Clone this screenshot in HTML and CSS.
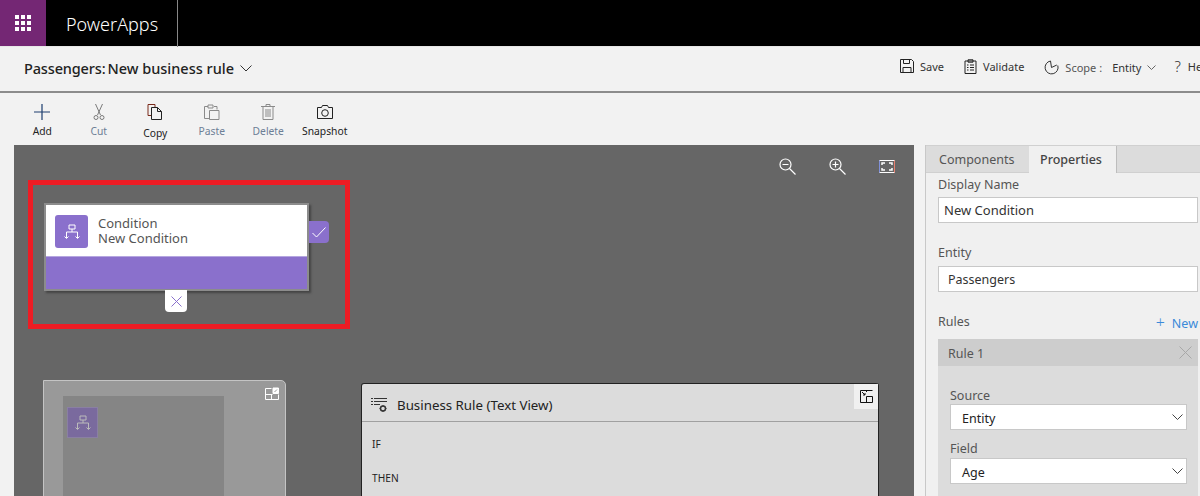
FILE: index.html
```html
<!DOCTYPE html>
<html lang="en">
<head>
<meta charset="utf-8">
<title>PowerApps</title>
<link rel="stylesheet" href="styles.css">
</head>
<body>
<div class="app">
  <header class="topbar">
    <div class="waffle">
      <svg width="16" height="16" viewBox="0 0 16 16" fill="#fff"><rect x="0" y="0" width="4" height="4"/><rect x="6" y="0" width="4" height="4"/><rect x="12" y="0" width="4" height="4"/><rect x="0" y="6" width="4" height="4"/><rect x="6" y="6" width="4" height="4"/><rect x="12" y="6" width="4" height="4"/><rect x="0" y="12" width="4" height="4"/><rect x="6" y="12" width="4" height="4"/><rect x="12" y="12" width="4" height="4"/></svg>
    </div>
    <div class="brand">PowerApps</div>
  </header>

  <div class="titlebar">
    <div class="title"><span class="title-entity">Passengers:</span><span class="title-name">New business rule</span>
      <svg class="title-chev" width="12" height="7" viewBox="0 0 12 7" fill="none" stroke="#333"><path d="M.5.5 6 6 11.5.5"/></svg>
    </div>
    <div class="actions">
      <div class="action action-save">
        <svg width="14" height="14" viewBox="0 0 14 14" fill="none" stroke="#222"><path d="M.5.5h11l2 2v11H.5z"/><path d="M3.5.5v4h6v-4M3 13.5v-5h8v5"/></svg>
        <span>Save</span>
      </div>
      <div class="action action-validate">
        <svg width="13" height="15" viewBox="0 0 13 15" fill="none" stroke="#222"><path d="M1 2h11v12.500H1z"/><path d="M4 .8h5v2.400H4zM3 6h1.500M6 6h4M3 8.500h1.500M6 8.500h4M3 11h1.500M6 11h4"/></svg>
        <span>Validate</span>
      </div>
      <div class="action action-scope">
        <svg width="15" height="15" viewBox="0 0 15 15" fill="none" stroke="#333"><path d="M6.500 1A6.500 6.500 0 1 0 13.800 5.500"/><path d="M6.500 1 7.500 7.500 12.800 5"/></svg>
        <span class="scope-label">Scope :</span>
        <span class="scope-value">Entity</span>
        <svg width="9" height="5" viewBox="0 0 9 5" fill="none" stroke="#666"><path d="M.5.500 4.500 4.500 8.500.500"/></svg>
      </div>
      <div class="action action-help">
        <span class="help-mark">?</span>
        <span>Help</span>
      </div>
    </div>
  </div>

  <nav class="toolbar">
    <div class="tool">
      <svg width="16" height="16" viewBox="0 0 16 16" stroke="#1c3d6e" stroke-width="1.200"><path d="M8 0v16M0 8h16"/></svg>
      <span>Add</span>
    </div>
    <div class="tool tool-off">
      <svg width="16" height="16" viewBox="0 0 16 16" fill="none" stroke="#7a7a7a"><path d="M4.500 0 9.500 11M11.500 0 6.500 11"/><circle cx="5" cy="13.500" r="2"/><circle cx="11" cy="13.500" r="2"/></svg>
      <span>Cut</span>
    </div>
    <div class="tool tool-copy">
      <svg width="16" height="16" viewBox="0 0 16 16" fill="none" stroke="#222"><path d="M1 .5h7v3M1 .5v11h3" stroke="#7a2a1a"/><path d="M4.500 3.500h6l4 4v8h-10zM10.500 3.500v4h4"/></svg>
      <span>Copy</span>
    </div>
    <div class="tool tool-off">
      <svg width="16" height="16" viewBox="0 0 16 16" fill="none" stroke="#8a8a8a"><path d="M4 2.500H.5v12H5M10 2.500h3v3"/><path d="M4 1h5v3H4zM5.500 6.500H15v9H5.500z"/></svg>
      <span>Paste</span>
    </div>
    <div class="tool tool-off">
      <svg width="14" height="16" viewBox="0 0 14 16" fill="none" stroke="#8a8a8a"><path d="M0 2.500h14M5 2.500V.5h4v2M2 2.500v13h10v-13M5 5v8M7 5v8M9 5v8"/></svg>
      <span>Delete</span>
    </div>
    <div class="tool">
      <svg width="16" height="14" viewBox="0 0 16 14" fill="none" stroke="#222"><path d="M.5 2.500h4l1-2h5l1 2h4v11H.5z"/><circle cx="8" cy="8" r="3.300"/></svg>
      <span>Snapshot</span>
    </div>
  </nav>

  <main class="workspace">
    <section class="canvas">
      <div class="zoom-tools">
        <svg width="17" height="17" viewBox="0 0 17 17" fill="none" stroke="#fff" stroke-width="1.200"><circle cx="6.500" cy="6.500" r="5.500"/><path d="M3.500 6.500h6M10.500 10.500l6 6"/></svg>
        <svg width="17" height="17" viewBox="0 0 17 17" fill="none" stroke="#fff" stroke-width="1.200"><circle cx="6.500" cy="6.500" r="5.500"/><path d="M3.500 6.500h6M6.500 3.500v6M10.500 10.500l6 6"/></svg>
        <svg width="16" height="13" viewBox="0 0 16 13" fill="none" stroke="#fff"><path d="M.5.500h15v12H.5z"/><path d="M.5.500v12" stroke="#7f8fd8"/><path d="M15.500.500v12" stroke="#e8806f"/><path d="M3 5V3h3M10 3h3v2M3 8v2h3M10 10h3V8" stroke-width="1.500"/></svg>
      </div>

      <div class="highlight"></div>

      <div class="node">
        <div class="node-head">
          <div class="node-icon">
            <svg width="16" height="16" viewBox="0 0 16 16" fill="none" stroke="#fff"><path d="M5 1h6v4H5zM8 5v3M2.500 8h11M2.500 8v6M13.500 8v6M.5 12.500l2 2 2-2M11.500 12.500l2 2 2-2"/></svg>
          </div>
          <div class="node-text">
            <div>Condition</div>
            <div>New Condition</div>
          </div>
        </div>
        <div class="node-foot"></div>
        <div class="node-yes">
          <svg width="14" height="11" viewBox="0 0 14 11" fill="none" stroke="#fff"><path d="M.5 6 4.500 10 13.500.5"/></svg>
        </div>
        <div class="node-no">
          <svg width="11" height="11" viewBox="0 0 11 11" fill="none" stroke="#8a70cc"><path d="M.5.500l10 10M10.500.500l-10 10"/></svg>
        </div>
      </div>

      <div class="minimap">
        <svg class="minimap-btn" width="14" height="13" viewBox="0 0 14 13" fill="none" stroke="#fff"><path d="M.5 1.500h6M.5 1.500v11h13V7.500M.5 7.500h7M6.500 7.500v5"/><path d="M8 1h5.500v5.500H8z" fill="#fff"/><path d="M9.500 5 12 2.500" stroke="#999"/></svg>
        <div class="minimap-view">
          <div class="minimap-node">
            <svg width="16" height="16" viewBox="0 0 16 16" fill="none" stroke="#bbb"><path d="M5 1h6v4H5zM8 5v3M2.500 8h11M2.500 8v6M13.500 8v6M.5 12.500l2 2 2-2M11.500 12.500l2 2 2-2"/></svg>
          </div>
        </div>
      </div>

      <div class="textview">
        <div class="textview-head">
          <svg width="17" height="15" viewBox="0 0 17 15" fill="none" stroke="#333"><path d="M0 .5h2M3 .5h13M0 3.500h2M3 3.500h13M0 6.500h2M3 6.500h6"/><circle cx="12" cy="10.500" r="2.500" stroke-width="1.500"/><path d="M12 7v1.500M12 12.500V14M8.500 10.500H10M14 10.500h1.500"/></svg>
          <span>Business Rule (Text View)</span>
          <div class="textview-btn">
            <svg width="13" height="13" viewBox="0 0 13 13" fill="none" stroke="#111"><path d="M12.500.5H.5v12h12V6.500H6.500v6M6.500.5V2M2 2l3 3M5 3v2H3"/></svg>
          </div>
        </div>
        <div class="textview-body">
          <div>IF</div>
          <div>THEN</div>
        </div>
      </div>
    </section>

    <aside class="panel">
      <div class="tabs">
        <div class="tab">Components</div>
        <div class="tab tab-active">Properties</div>
      </div>
      <div class="panel-body">
        <label class="label label-first">Display Name</label>
        <div class="input">New Condition</div>
        <label class="label label-entity">Entity</label>
        <div class="input input-entity">Passengers</div>
        <div class="rules-head">
          <span class="label rules-label">Rules</span>
          <span class="new-link"><span class="new-plus">+</span>New</span>
        </div>
        <div class="rule">
          <div class="rule-head">
            <span>Rule 1</span>
            <svg width="13" height="13" viewBox="0 0 13 13" fill="none" stroke="#a8a8a8"><path d="M.5.500l12 12M12.500.500l-12 12"/></svg>
          </div>
          <div class="rule-body">
            <label class="label">Source</label>
            <div class="select"><span>Entity</span><svg width="11" height="6" viewBox="0 0 11 6" fill="none" stroke="#444"><path d="M.5.500l5 5 5-5"/></svg></div>
            <label class="label label-field">Field</label>
            <div class="select"><span>Age</span><svg width="11" height="6" viewBox="0 0 11 6" fill="none" stroke="#444"><path d="M.5.500l5 5 5-5"/></svg></div>
          </div>
        </div>
      </div>
    </aside>
  </main>
</div>
</body>
</html>
```

FILE: styles.css
```css
* { box-sizing: border-box; }
html, body { margin: 0; height: 100%; overflow: hidden; }
body { font-family: "Noto Sans", "Open Sans", "Liberation Sans", sans-serif; color: #333; background: #f2f2f2; }
svg { display: block; flex: none; }
.app { width: 1200px; height: 496px; display: flex; flex-direction: column; overflow: hidden; }

.topbar { height: 47px; flex: none; background: #000; display: flex; border-bottom: 1px solid #e8e8e8; }
.waffle { width: 46px; height: 46px; background: #742774; display: flex; align-items: center; justify-content: center; }
.brand { width: 132px; height: 47px; padding: 11px 0 0 20px; color: #fff; font-size: 18px; line-height: 26px; font-weight: 300; border-right: 1px solid #888; }

.titlebar { height: 46px; flex: none; display: flex; justify-content: space-between; background: #f2f2f2; border-bottom: 2px solid #8c8c8c; padding-left: 24px; }
.title { display: flex; align-items: center; font-size: 14.500px; font-weight: 500; color: #222; height: 42px; }
.title-entity { letter-spacing: -.15px; }
.title-name { margin-left: 2px; }
.title-chev { margin-left: 6px; }
.actions { display: flex; align-items: flex-start; width: 300px; flex: none; overflow: hidden; font-size: 11px; color: #333; }
.action { display: flex; align-items: center; gap: 6px; height: 38px; white-space: nowrap; flex: none; }
.action-validate { margin-left: 20px; }
.action-scope { margin-left: 20px; gap: 6px; padding-top: 2px; }
.action-help { margin-left: 18px; gap: 7px; }
.scope-label { color: #555; }
.scope-value { margin-left: 4px; }
.help-mark { font-size: 15px; font-weight: 300; }

.toolbar { height: 52px; flex: none; display: grid; grid-template-columns: repeat(6, 56.5px); padding-left: 14px; background: #f2f2f2; }
.tool { display: flex; flex-direction: column; align-items: center; padding-top: 11px; font-size: 10.300px; line-height: 14px; color: #222; height: 52px; }
.tool svg { height: 16px; margin-bottom: 4px; }
.tool-off { color: #6d7f96; }
.tool-copy span { margin-top: 2px; }

.workspace { flex: 1; display: flex; min-height: 0; padding-left: 14px; }
.canvas { width: 900px; position: relative; background: #666; overflow: hidden; flex: none; }
.zoom-tools { position: absolute; top: 13px; left: 765px; display: flex; gap: 33px; align-items: center; }
.highlight { position: absolute; left: 14px; top: 35px; width: 322px; height: 149px; border: 5px solid #ed1c24; }

.node { position: absolute; left: 30px; top: 58px; width: 265px; height: 88px; border: 2px solid #8c8c8c; box-shadow: 2px 2px 2px #444; background: #fff; }
.node-head { height: 52px; display: flex; align-items: flex-start; padding: 10px 0 0 9px; background: #fff; border-bottom: 1px solid #b5a6e0; }
.node-icon { width: 33px; height: 33px; border-radius: 3px; background: #8a70cc; display: flex; align-items: center; justify-content: center; }
.node-text { margin-left: 10px; font-size: 13px; line-height: 15px; color: #555; padding-top: 1px; }
.node-foot { height: 32px; background: #8a70cc; }
.node-yes { position: absolute; left: 263px; top: 16px; width: 20px; height: 22px; background: #8a70cc; border-radius: 0 4px 4px 0; display: flex; align-items: center; justify-content: center; }
.node-no { position: absolute; left: 119px; top: 85px; width: 22px; height: 22px; background: #fff; border-radius: 0 0 4px 4px; display: flex; align-items: center; justify-content: center; }

.minimap { position: absolute; left: 29px; top: 235px; width: 243px; height: 200px; background: #999; border: 1px solid #c4c4c4; border-radius: 0 5px 0 0; padding: 15px 0 0 19px; }
.minimap-btn { position: absolute; top: 6px; right: 6px; }
.minimap-view { width: 161px; height: 150px; background: #858585; padding: 11px 0 0 4px; }
.minimap-node { width: 31px; height: 31px; background: #7a6a9e; border: 1px solid #8a7fa3; display: flex; align-items: center; justify-content: center; }

.textview { position: absolute; left: 347px; top: 238px; width: 518px; height: 200px; background: #dcdcdc; border: 1px solid #222; border-bottom: 0; border-radius: 3px 3px 0 0; color: #222; }
.textview-head { height: 38px; position: relative; display: flex; align-items: center; gap: 9px; padding: 4px 0 0 9px; font-size: 13.300px; border-bottom: 1px solid #a0a0a0; }
.textview-head > svg { margin-top: 2px; }
.textview-btn { position: absolute; top: 0; right: 0; width: 24px; height: 25px; background: #f0f0f0; display: flex; align-items: center; justify-content: center; }
.textview-body { padding: 15px 0 0 10px; font-size: 10.200px; line-height: 14px; display: flex; flex-direction: column; gap: 20px; }

.panel { margin-left: 11px; width: 275px; flex: none; background: #f0f0f0; border-left: 1px solid #c8c8c8; display: flex; flex-direction: column; font-size: 12.500px; }
.tabs { height: 28px; flex: none; display: flex; background: #dcdcdc; border-top: 1px solid #d0d0d0; border-bottom: 1px solid #d0d0d0; color: #555; }
.tab { padding: 4px 13px 0; line-height: 20px; width: 103px; }
.tab-active { width: 88px; padding: 4px 11px 0; background: #f0f0f0; font-weight: 500; color: #444; margin-bottom: -1px; border-right: 1px solid #bdbdbd; }
.panel-body { padding: 0 2px 0 12px; }
.label { display: block; color: #555; line-height: 17px; }
.label-first { margin-top: 3px; margin-bottom: 4px; }
.label-entity { margin-top: 21px; margin-bottom: 5px; }
.input { height: 26px; background: #fff; border: 1px solid #c8c8c8; line-height: 25px; padding-left: 5px; color: #333; font-size: 13px; }
.input-entity { padding-left: 9px; font-size: 12.500px; }
.rules-head { display: flex; justify-content: space-between; align-items: center; margin-top: 21px; height: 18px; }
.rules-label { padding-bottom: 2px; }
.new-link { color: #3b8ad9; white-space: nowrap; }
.new-plus { font-size: 16px; font-weight: 300; margin-right: 7px; }
.rule { margin-top: 8px; background: #dcdcdc; height: 200px; }
.rule-head { height: 27px; background: #cdcdcd; display: flex; justify-content: space-between; align-items: center; padding: 2px 6px 0 10px; color: #555; }
.rule-head svg { margin-top: -2px; }
.rule-body { padding: 22px 11px 0 12px; }
.rule-body .label { line-height: 16px; margin-bottom: 0; }
.rule-body .label-field { margin-top: 11px; margin-bottom: 1px; }
.select { height: 26px; background: #fff; border: 1px solid #c8c8c8; padding: 2px 3px 0 11px; display: flex; align-items: center; justify-content: space-between; color: #222; }
.select svg { margin-top: -2px; }
```
